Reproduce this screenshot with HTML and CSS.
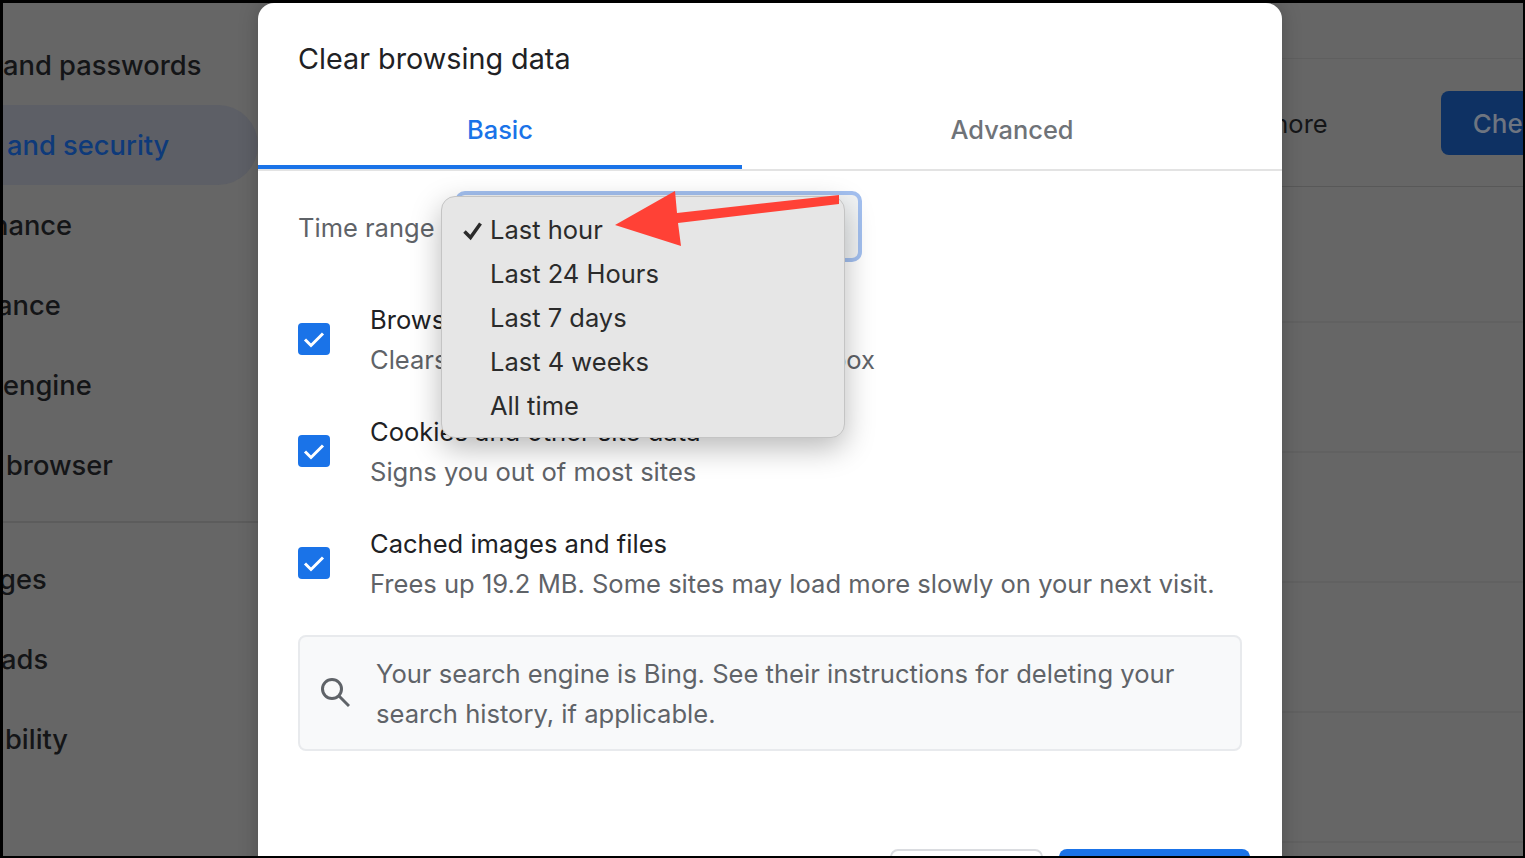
FILE: index.html
```html
<!DOCTYPE html>
<html lang="en">
<head>
<meta charset="utf-8">
<title>Clear browsing data</title>
<link rel="stylesheet" href="styles.css">
</head>
<body>
<div class="screen">
  <div class="page">
    <nav class="sidebar">
      <div class="nav-item">and passwords</div>
      <div class="nav-item active">and security</div>
      <div class="nav-item"><span class="shift-nance">nance</span></div>
      <div class="nav-item"><span class="shift-ance">ance</span></div>
      <div class="nav-item">engine</div>
      <div class="nav-item"><span class="shift-browser">browser</span></div>
      <div class="nav-sep"></div>
      <div class="nav-item"><span class="shift-ges">ges</span></div>
      <div class="nav-item"><span class="shift-ads">ads</span></div>
      <div class="nav-item"><span class="shift-bility">bility</span></div>
    </nav>
    <main class="content">
      <section class="card-top">
        <span class="more">more</span>
        <span class="check-btn">Check now</span>
      </section>
      <div class="rows">
        <div class="row"></div>
        <div class="row"></div>
        <div class="row"></div>
        <div class="row"></div>
        <div class="row"></div>
      </div>
    </main>
  </div>

  <div class="dialog">
    <h1 class="title">Clear browsing data</h1>
    <div class="tabs">
      <div class="tab selected">Basic</div>
      <div class="tab">Advanced</div>
    </div>
    <div class="body">
      <div class="range">
        <span class="range-label">Time range</span>
        <div class="select"></div>
      </div>
      <div class="option">
        <span class="box"><svg viewBox="0 0 32 32" class="tick"><path d="M7 16.5l6 6L25 10.5"/></svg></span>
        <div class="option-text">
          <div class="option-title">Browsing history</div>
          <div class="option-sub">Clears history, including in the search box</div>
        </div>
      </div>
      <div class="option">
        <span class="box"><svg viewBox="0 0 32 32" class="tick"><path d="M7 16.5l6 6L25 10.5"/></svg></span>
        <div class="option-text">
          <div class="option-title">Cookies and other site data</div>
          <div class="option-sub">Signs you out of most sites</div>
        </div>
      </div>
      <div class="option">
        <span class="box"><svg viewBox="0 0 32 32" class="tick"><path d="M7 16.5l6 6L25 10.5"/></svg></span>
        <div class="option-text">
          <div class="option-title">Cached images and files</div>
          <div class="option-sub">Frees up 19.2 MB. Some sites may load more slowly on your next visit.</div>
        </div>
      </div>
      <div class="notice">
        <svg class="search" viewBox="0 0 30 30"><circle cx="12" cy="11" r="9.5"/><path d="M19 18l10 10"/></svg>
        <p class="notice-text">Your search engine is Bing. See their instructions for deleting your search history, if applicable.</p>
      </div>
    </div>
    <div class="actions">
      <span class="btn-cancel"></span>
      <span class="btn-clear"></span>
    </div>
  </div>

  <div class="menu">
    <div class="menu-item"><svg class="menu-check" viewBox="0 0 20 20"><path d="M1.5 10.5L7.5 16.5L17.5 2.5"/></svg>Last hour</div>
    <div class="menu-item">Last 24 Hours</div>
    <div class="menu-item">Last 7 days</div>
    <div class="menu-item">Last 4 weeks</div>
    <div class="menu-item">All time</div>
  </div>

  <svg class="arrow" viewBox="0 0 230 60"><polygon points="0,34 60,0 62,22 224,4 224,13 63,32 66,55"/></svg>
</div>
</body>
</html>
```
FILE: styles.css
```css
* { box-sizing: border-box; }
html, body { margin: 0; height: 100%; }
body { background: #000; font-family: Inter, "Liberation Sans", sans-serif; overflow: hidden; }

.screen {
  position: absolute;
  left: 3px; top: 3px; right: 2px; bottom: 2px;
  background: #666;
  overflow: hidden;
}

.page { display: flex; height: 100%; }

.sidebar { width: 255px; flex: none; padding-top: 22px; overflow: hidden; }
.nav-item {
  height: 80px;
  display: flex;
  align-items: center;
  font-size: 27.3px;
  font-weight: 500;
  color: #141517;
  white-space: nowrap;
}
.nav-item.active {
  color: #0e3a7a;
  background: #5d5f66;
  border-radius: 0 40px 40px 0;
  padding-left: 4px;
}
.nav-sep { height: 2px; background: #5c5c5c; margin: 16px 0; }
.shift-nance { margin-left: -11px; }
.shift-ance { margin-left: -6px; }
.shift-browser { margin-left: 3px; }
.shift-ges { margin-left: -4px; }
.shift-ads { margin-left: -2px; }
.shift-bility { margin-left: 2px; }

.content { flex: 1; padding-top: 55px; min-width: 0; overflow: hidden; }
.card-top {
  height: 129px;
  border-top: 1px solid #5f5f5f;
  border-bottom: 1px solid #585858;
  display: flex;
  align-items: center;
  white-space: nowrap;
}
.more { font-size: 25.5px; color: #141517; margin-left: 1008px; padding-top: 2px; }
.check-btn {
  margin-left: 113px;
  width: 200px;
  height: 64px;
  background: #0e3163;
  color: #6e7580;
  border-radius: 8px;
  font-size: 26px;
  font-weight: 500;
  padding: 17px 32px 0;
  flex: none;
}
.rows { padding-top: 6px; }
.row { height: 130px; border-bottom: 2px solid #616161; }

.dialog {
  position: absolute;
  left: 255px; top: 0;
  width: 1024px; height: 900px;
  background: #fff;
  border-radius: 16px 16px 0 0;
  box-shadow: 0 0 20px rgba(0,0,0,.22);
}
.title {
  margin: 0;
  padding: 38px 40px 0;
  font-size: 28.75px;
  line-height: 36px;
  font-weight: 400;
  color: #202124;
}
.tabs {
  display: flex;
  margin-top: 14px;
  border-bottom: 2px solid #e3e3e3;
  height: 80px;
}
.tab {
  width: 540px;
  text-align: center;
  font-size: 25.4px;
  font-weight: 500;
  line-height: 34px;
  padding-top: 22px;
  color: #6f7378;
}
.tab.selected { width: 484px; color: #1a73e8; border-bottom: 4px solid #1a73e8; height: 78px; }

.body { padding: 20px 40px 0; }
.range { display: flex; align-items: center; height: 72px; }
.range-label { font-size: 25.5px; color: #5f6368; width: 157px; flex: none; }
.select {
  width: 407px; height: 71px;
  align-self: flex-start;
  border: 4px solid #a3c0f0;
  border-radius: 10px;
  background: #f1f3f4;
}
.range + .option { margin-top: 20px; }
.option { display: flex; align-items: center; height: 112px; }
.box {
  width: 32px; height: 32px;
  border-radius: 4px;
  background: #1a73e8;
  flex: none;
  margin-right: 40px;
}
.tick { display: block; width: 32px; height: 32px; fill: none; stroke: #fff; stroke-width: 3; }
.option-text { padding-top: 1px; }
.option-title { font-size: 25.55px; line-height: 40px; color: #202124; white-space: nowrap; }
.option-sub { font-size: 25.55px; line-height: 40px; color: #5f6368; white-space: nowrap; }

.notice {
  margin-top: 16px;
  display: flex;
  align-items: center;
  height: 116px;
  border: 2px solid #e8eaed;
  border-radius: 8px;
  background: #f8f9fa;
  padding: 0 20px;
}
.search { width: 30px; height: 30px; flex: none; margin-right: 26px; fill: none; stroke: #5f6368; stroke-width: 3; }
.notice-text { margin: 0; padding-top: 2px; font-size: 25.58px; line-height: 40px; color: #5f6368; }

.actions { display: flex; justify-content: flex-end; gap: 16px; margin-top: 98px; padding-right: 32px; }
.btn-cancel { width: 153px; height: 60px; border: 2px solid #dadce0; border-radius: 8px; }
.btn-clear { width: 191px; height: 60px; background: #1a73e8; border-radius: 8px; }

.menu {
  position: absolute;
  left: 438px; top: 193px;
  width: 404px; height: 242px;
  background: #e6e6e6;
  border: 1px solid #c4c4c4;
  border-radius: 14px;
  box-shadow: 0 10px 30px rgba(0,0,0,.28);
  padding: 11px 0;
}
.menu-item {
  position: relative;
  height: 44px;
  line-height: 44px;
  font-size: 25.5px;
  color: #2b2b2b;
  padding-left: 48px;
}
.menu-check {
  position: absolute;
  left: 21px; top: 13px;
  width: 20px; height: 20px;
  fill: none; stroke: #2b2b2b; stroke-width: 3.5;
}
.arrow {
  position: absolute;
  left: 612px; top: 188px;
  width: 230px; height: 60px;
  fill: #ff4136;
}
```
